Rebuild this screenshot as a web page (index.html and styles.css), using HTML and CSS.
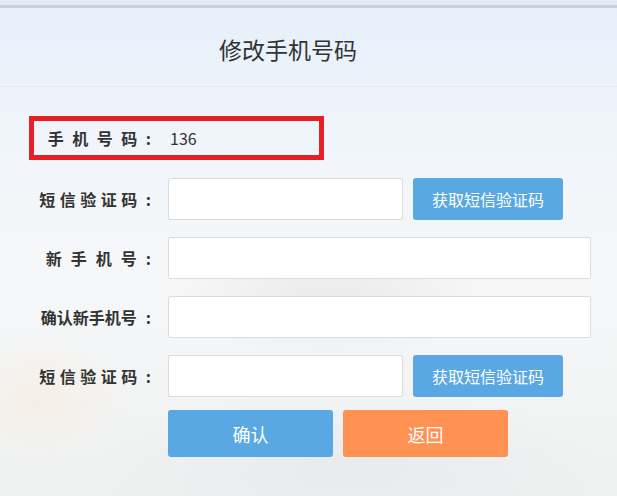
FILE: index.html
```html
<!DOCTYPE html>
<html lang="zh-CN">
<head>
    <meta charset="UTF-8">
    <meta name="viewport" content="width=device-width, initial-scale=1.0">
    <title>修改手机号码</title>
    <link rel="stylesheet" href="styles.css">
</head>
<body>
    <div class="topbar"></div>
    <div class="page">
        <div class="header">
            <h1>修改手机号码</h1>
        </div>
        <form class="form" id="phoneForm">
            <div class="row row-current">
                <span class="label"><span class="chars chars-current">手机号码</span><span class="colon colon-current">:</span></span>
                <span class="value">136</span>
            </div>
            <div class="row">
                <label class="label" for="code1"><span class="chars chars-mid">短信验证码</span><span class="colon colon-mid">:</span></label>
                <input class="input input-short" id="code1" type="text">
                <button type="button" class="btn btn-code">获取短信验证码</button>
            </div>
            <div class="row">
                <label class="label" for="newPhone"><span class="chars chars-wide">新手机号</span><span class="colon colon-wide">:</span></label>
                <input class="input" id="newPhone" type="text">
            </div>
            <div class="row">
                <label class="label" for="confirmPhone"><span class="chars">确认新手机号</span><span class="colon">:</span></label>
                <input class="input" id="confirmPhone" type="text">
            </div>
            <div class="row">
                <label class="label" for="code2"><span class="chars chars-mid">短信验证码</span><span class="colon colon-mid">:</span></label>
                <input class="input input-short" id="code2" type="text">
                <button type="button" class="btn btn-code">获取短信验证码</button>
            </div>
            <div class="row row-actions">
                <button type="submit" class="btn btn-action btn-confirm">确认</button>
                <button type="button" class="btn btn-action btn-back">返回</button>
            </div>
        </form>
    </div>
</body>
</html>
```

FILE: styles.css
```css
html, body {
    height: 100%;
}
body {
    margin: 0;
    font-family: "Noto Sans CJK SC", "Noto Sans", sans-serif;
    color: #333;
    background-color: #f1f3f4;
    background-image:
        radial-gradient(ellipse 90px 60px at 40px 400px, rgba(255, 226, 196, 0.3), rgba(255, 226, 196, 0)),
        radial-gradient(ellipse 160px 60px at 330px 300px, rgba(210, 214, 218, 0.4), rgba(210, 214, 218, 0)),
        radial-gradient(ellipse 260px 80px at 350px 470px, rgba(226, 229, 231, 0.6), rgba(226, 229, 231, 0)),
        linear-gradient(to bottom, #e6f0fa 0%, #f2f6fa 35%, #f6f7f8 60%, #eff1f1 100%);
    overflow: hidden;
}
.topbar {
    height: 5px;
    background-color: #e1ecf7;
    border-bottom: 3px solid #cdd1d5;
}
.header {
    height: 78px;
    display: flex;
    align-items: center;
    justify-content: center;
    padding-right: 41px;
    border-bottom: 1px solid #e6eaee;
}
h1 {
    margin: 0;
    font-size: 23px;
    font-weight: 400;
    color: #333;
    padding-top: 3px;
}
.form {
    display: flex;
    flex-direction: column;
    gap: 17px;
    padding-top: 29px;
}
.row {
    display: flex;
    align-items: center;
}
.label {
    width: 152px;
    margin-right: 16px;
    text-align: right;
    font-size: 16px;
    font-weight: 700;
    color: #333;
    white-space: nowrap;
}
.chars-mid {
    letter-spacing: 4.5px;
}
.chars-wide {
    letter-spacing: 9px;
}
.chars-current {
    letter-spacing: 8.5px;
}
.colon {
    margin-left: 9px;
    padding-right: 1px;
}
.colon-mid {
    margin-left: 4px;
}
.colon-wide,
.colon-current {
    margin-left: 0;
}
.row-current {
    width: 295px;
    height: 44px;
    box-sizing: border-box;
    margin-left: 29px;
    margin-bottom: 1px;
    border: 5px solid #e71f27;
}
.row-current .label {
    width: 118px;
    margin-right: 18px;
}
.value {
    font-size: 16px;
    color: #333;
}
.input {
    width: 423px;
    height: 42px;
    box-sizing: border-box;
    border: 1px solid #dcdcdc;
    border-radius: 2px;
    background-color: #ffffff;
    padding: 0 10px;
    font-size: 15px;
    font-family: inherit;
    outline: none;
}
.input-short {
    width: 235px;
}
.btn {
    border: none;
    border-radius: 3px;
    color: #ffffff;
    font-family: inherit;
    cursor: pointer;
}
.btn-code {
    width: 150px;
    height: 42px;
    margin-left: 10px;
    background-color: #5aa8e3;
    font-size: 16px;
}
.row-actions {
    padding-left: 168px;
    gap: 10px;
    margin-top: -4px;
}
.btn-action {
    width: 165px;
    height: 47px;
    font-size: 18px;
}
.btn-confirm {
    background-color: #5aa8e3;
}
.btn-back {
    background-color: #ff9153;
}
```
